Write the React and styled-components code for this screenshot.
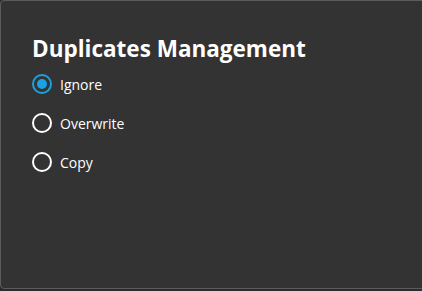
import React, { useState } from "react";
import styled, { createGlobalStyle } from "styled-components";

const Global = createGlobalStyle`
  html, body { margin: 0; padding: 0; background: #2b2b2b; }
  body { font-family: "Open Sans", "Noto Sans", sans-serif; }
`;

const Panel = styled.div`
  box-sizing: border-box;
  width: 426px;
  height: 289px;
  background: #333333;
  border: 1px solid #5c5c5c;
  border-radius: 4px;
  padding: 34px 0 0 31px;
  display: flex;
  flex-direction: column;
`;

const Title = styled.h2`
  margin: 0;
  color: #ffffff;
  font-size: 22.5px;
  line-height: 28px;
  font-weight: 700;
  letter-spacing: 0;
`;

const Options = styled.div`
  display: flex;
  flex-direction: column;
  gap: 19px;
  margin-top: 11px;
`;

const Option = styled.label`
  display: flex;
  align-items: center;
  gap: 8px;
  height: 20px;
  color: #ffffff;
  font-size: 14px;
  cursor: pointer;
`;

const Circle = styled.span`
  box-sizing: border-box;
  width: 20px;
  height: 20px;
  border-radius: 50%;
  border: 2px solid ${(p) => (p.$checked ? "#1ba1e2" : "#ffffff")};
  display: flex;
  align-items: center;
  justify-content: center;
  &::after {
    content: "";
    display: ${(p) => (p.$checked ? "block" : "none")};
    width: 10px;
    height: 10px;
    border-radius: 50%;
    background: #1ba1e2;
  }
`;

const options = ["Ignore", "Overwrite", "Copy"];

export default function App() {
  const [value, setValue] = useState("Ignore");
  return (
    <>
      <Global />
      <Panel>
        <Title>Duplicates Management</Title>
        <Options>
          {options.map((o) => (
            <Option key={o} onClick={() => setValue(o)}>
              <Circle $checked={value === o} />
              {o}
            </Option>
          ))}
        </Options>
      </Panel>
    </>
  );
}
